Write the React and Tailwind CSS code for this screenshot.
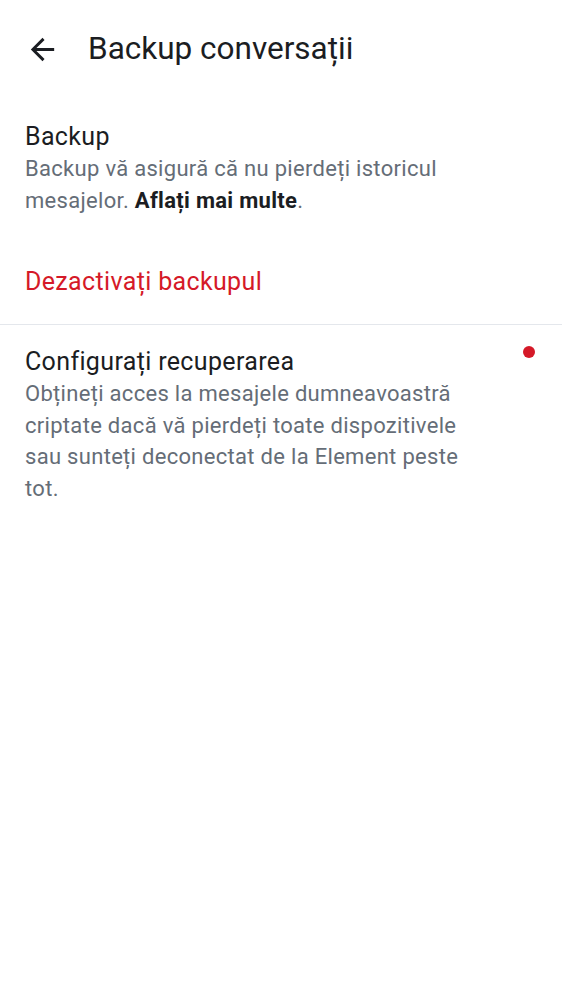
function BackArrow() {
  return (
    <svg viewBox="0 0 24 24" className="w-[35px] h-[35px] fill-[#1b1d22]">
      <path d="M20 11H7.83l5.59-5.59L12 4l-8 8 8 8 1.41-1.41L7.83 13H20v-2z" />
    </svg>
  )
}

function App() {
  return (
    <div className="min-h-screen bg-white font-['Roboto',sans-serif] text-[#1b1d22]">
      {/* top bar */}
      <div className="h-[98px] flex items-center pl-[25px]">
        <button className="flex items-center justify-center">
          <BackArrow />
        </button>
        <h1 className="ml-[28px] text-[31.5px] leading-[44px]">Backup conversații</h1>
      </div>

      {/* backup info */}
      <div className="px-[25px] pt-[22px]">
        <p className="text-[25px] leading-[34px] tracking-[0.35px]">Backup</p>
        <p className="-mt-px text-[22px] leading-[31.5px] tracking-[0.3px] text-[#656d77] pr-[90px]">
          Backup vă asigură că nu pierdeți istoricul mesajelor.{' '}
          <span className="font-bold text-[#1b1d22]">Aflați mai multe</span>.
        </p>
      </div>

      <div className="px-[25px] pt-[49px] pb-[25px]">
        <button className="text-[25px] leading-[34px] tracking-[0.35px] text-[#d51928]">Dezactivați backupul</button>
      </div>

      <div className="h-px bg-[#e4e7ec]" />

      {/* recovery */}
      <div className="flex pl-[25px] pr-[27px] pt-[20px]">
        <div className="flex-1">
          <p className="text-[25px] leading-[34px] tracking-[0.35px]">Configurați recuperarea</p>
          <p className="-mt-px text-[22px] leading-[31.5px] tracking-[0.3px] text-[#656d77]">
            Obțineți acces la mesajele dumneavoastră criptate dacă vă pierdeți toate dispozitivele sau sunteți deconectat de la Element peste tot.
          </p>
        </div>
        <div className="w-[64px] flex justify-end pt-[1px]">
          <span className="block w-3 h-3 rounded-full bg-[#d51928]" />
        </div>
      </div>
    </div>
  )
}

export default App
